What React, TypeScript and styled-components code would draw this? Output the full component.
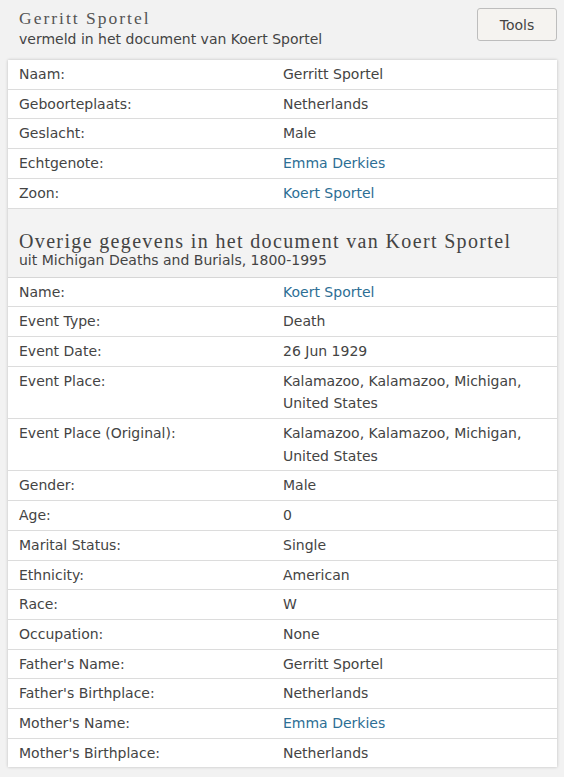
import React from "react";
import styled, { createGlobalStyle } from "styled-components";

const Global = createGlobalStyle`
  html, body { margin: 0; padding: 0; background: #f2f2f2; }
  body { font-family: "DejaVu Sans", Verdana, sans-serif; color: #444; }
`;

const Page = styled.div`
  padding: 0 7px 9px 8px;
  background: #f2f2f2;
`;

const Header = styled.div`
  display: flex;
  justify-content: space-between;
  align-items: flex-start;
  padding: 7px 0 0 11px;
  height: 53px;
`;

const TitleBlock = styled.div`
  display: flex;
  flex-direction: column;
`;

const Title = styled.h1`
  margin: 0;
  font-family: "Liberation Serif", "Times New Roman", serif;
  font-weight: normal;
  font-size: 17.5px;
  line-height: 22px;
  letter-spacing: 2px;
  color: #555;
`;

const Subtitle = styled.div`
  font-size: 14px;
  line-height: 21px;
  color: #444;
`;

const ToolsButton = styled.button`
  margin-top: 1px;
  width: 80px;
  height: 33px;
  border: 1px solid #bdbdbd;
  border-radius: 3px;
  background: #f5f3f0;
  font-family: "DejaVu Sans", Verdana, sans-serif;
  font-size: 14px;
  color: #444;
`;

const Card = styled.div`
  background: #fff;
  box-shadow: 0 0 3px rgba(0, 0, 0, 0.22);
`;

const Row = styled.div`
  display: grid;
  grid-template-columns: 264px 1fr;
  border-bottom: 1px solid #dcdcdc;
  &:last-child { border-bottom: none; }
`;

const Cell = styled.div`
  padding: 3px 10px 3px 11px;
  font-size: 14px;
  line-height: 22.7px;
  color: #444;
`;

const Link = styled.a`
  color: #2d6e94;
  text-decoration: none;
`;

const Section = styled.div`
  background: #f3f3f3;
  padding: 21px 10px 8px 11px;
  border-bottom: 1px solid #d6d6d6;
`;

const SectionTitle = styled.h2`
  margin: 0;
  font-family: "Liberation Serif", "Times New Roman", serif;
  font-weight: normal;
  font-size: 20px;
  line-height: 22px;
  letter-spacing: 1.35px;
  color: #444;
`;

const SectionSub = styled.div`
  font-size: 14px;
  line-height: 17px;
  color: #444;
`;

type Item = { label: string; value: string; link?: boolean };

const first: Item[] = [
  { label: "Naam:", value: "Gerritt Sportel" },
  { label: "Geboorteplaats:", value: "Netherlands" },
  { label: "Geslacht:", value: "Male" },
  { label: "Echtgenote:", value: "Emma Derkies", link: true },
  { label: "Zoon:", value: "Koert Sportel", link: true },
];

const second: Item[] = [
  { label: "Name:", value: "Koert Sportel", link: true },
  { label: "Event Type:", value: "Death" },
  { label: "Event Date:", value: "26 Jun 1929" },
  { label: "Event Place:", value: "Kalamazoo, Kalamazoo, Michigan, United States" },
  { label: "Event Place (Original):", value: "Kalamazoo, Kalamazoo, Michigan, United States" },
  { label: "Gender:", value: "Male" },
  { label: "Age:", value: "0" },
  { label: "Marital Status:", value: "Single" },
  { label: "Ethnicity:", value: "American" },
  { label: "Race:", value: "W" },
  { label: "Occupation:", value: "None" },
  { label: "Father's Name:", value: "Gerritt Sportel" },
  { label: "Father's Birthplace:", value: "Netherlands" },
  { label: "Mother's Name:", value: "Emma Derkies", link: true },
  { label: "Mother's Birthplace:", value: "Netherlands" },
];

const Rows = ({ items }: { items: Item[] }) => (
  <>
    {items.map((it) => (
      <Row key={it.label}>
        <Cell>{it.label}</Cell>
        <Cell>{it.link ? <Link href="#">{it.value}</Link> : it.value}</Cell>
      </Row>
    ))}
  </>
);

export default function App() {
  return (
    <Page>
      <Global />
      <Header>
        <TitleBlock>
          <Title>Gerritt Sportel</Title>
          <Subtitle>vermeld in het document van Koert Sportel</Subtitle>
        </TitleBlock>
        <ToolsButton>Tools</ToolsButton>
      </Header>
      <Card>
        <Rows items={first} />
        <Section>
          <SectionTitle>Overige gegevens in het document van Koert Sportel</SectionTitle>
          <SectionSub>uit Michigan Deaths and Burials, 1800-1995</SectionSub>
        </Section>
        <Rows items={second} />
      </Card>
    </Page>
  );
}
